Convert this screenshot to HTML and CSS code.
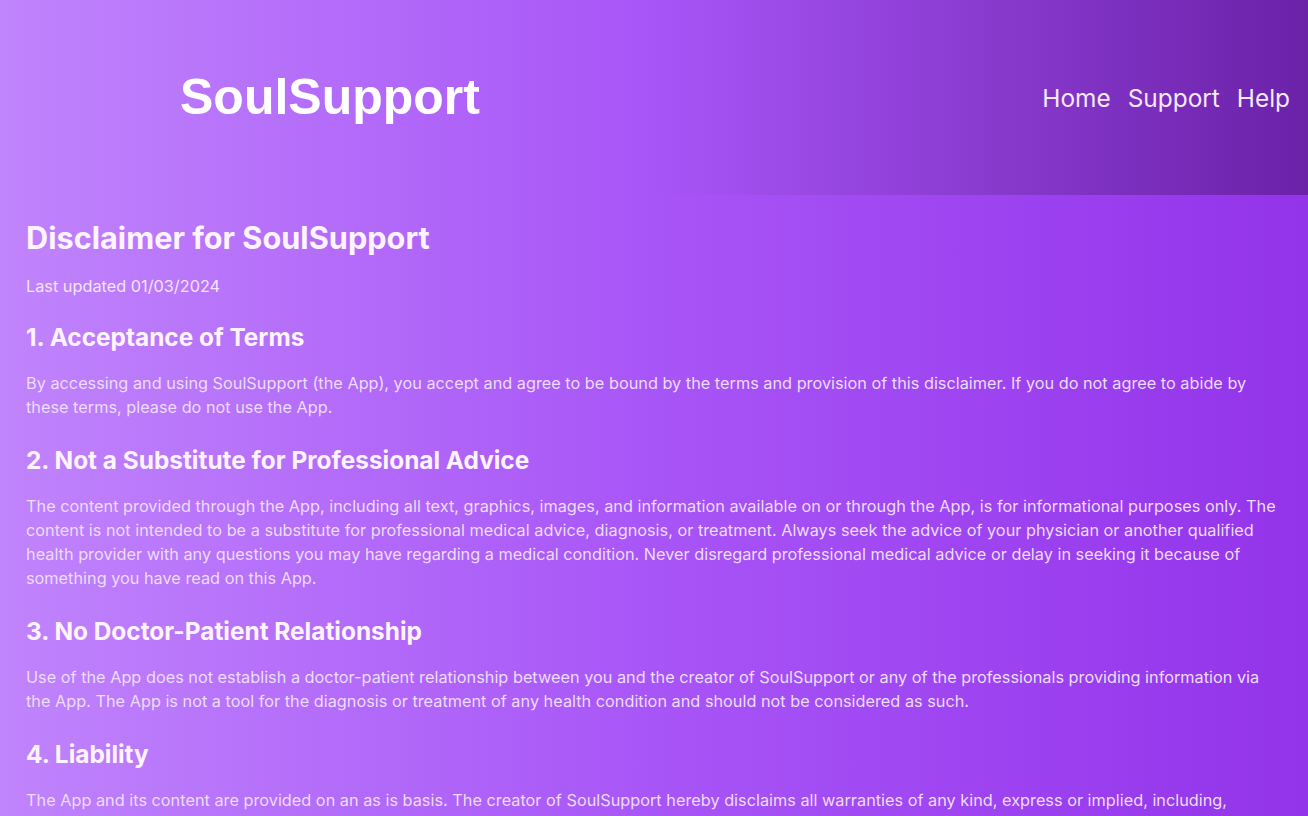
FILE: index.html
```html
<!DOCTYPE html>
<html lang="en">
<head>
<meta charset="utf-8">
<title>SoulSupport - Disclaimer</title>
<link rel="stylesheet" href="styles.css">
</head>
<body>
<header class="site-header">
  <div class="brand">SoulSupport</div>
  <nav class="nav">
    <a href="#">Home</a>
    <a href="#">Support</a>
    <a href="#">Help</a>
  </nav>
</header>
<main class="content">
  <h1 class="title">Disclaimer for SoulSupport</h1>
  <p class="updated">Last updated 01/03/2024</p>

  <h2 class="section-title">1. Acceptance of Terms</h2>
  <p class="text">By accessing and using SoulSupport (the App), you accept and agree to be bound by the terms and provision of this disclaimer. If you do not agree to abide by these terms, please do not use the App.</p>

  <h2 class="section-title">2. Not a Substitute for Professional Advice</h2>
  <p class="text">The content provided through the App, including all text, graphics, images, and information available on or through the App, is for informational purposes only. The content is not intended to be a substitute for professional medical advice, diagnosis, or treatment. Always seek the advice of your physician or another qualified health provider with any questions you may have regarding a medical condition. Never disregard professional medical advice or delay in seeking it because of something you have read on this App.</p>

  <h2 class="section-title">3. No Doctor-Patient Relationship</h2>
  <p class="text">Use of the App does not establish a doctor-patient relationship between you and the creator of SoulSupport or any of the professionals providing information via the App. The App is not a tool for the diagnosis or treatment of any health condition and should not be considered as such.</p>

  <h2 class="section-title">4. Liability</h2>
  <p class="text">The App and its content are provided on an as is basis. The creator of SoulSupport hereby disclaims all warranties of any kind, express or implied, including, without limitation, the warranties of merchantability, fitness for a particular purpose, and non-infringement.</p>
</main>
</body>
</html>
```

FILE: styles.css
```css
* {
  box-sizing: border-box;
}

html, body {
  margin: 0;
  padding: 0;
}

body {
  font-family: Inter, "Noto Sans", sans-serif;
  background: linear-gradient(to right, #c084fc 0%, #a855f7 50%, #9333ea 100%);
  color: #fdf4ff;
  min-height: 100vh;
}

.site-header {
  height: 195px;
  display: flex;
  align-items: center;
  background: linear-gradient(to right, #c084fc 0%, #a855f7 50%, #6b21a8 100%);
  padding-right: 18px;
}

.brand {
  width: 660px;
  text-align: center;
  font-family: "Liberation Sans", Arial, sans-serif;
  font-weight: 700;
  font-size: 50px;
  color: #ffffff;
  padding-bottom: 2px;
}

.nav {
  margin-left: auto;
  display: flex;
  gap: 17px;
}

.nav a {
  color: #f5e9ff;
  text-decoration: none;
  font-size: 24.4px;
  font-weight: 400;
}

.content {
  padding: 25px 26px 40px;
}

.title {
  margin: 0 0 20px;
  font-size: 30.7px;
  line-height: 36px;
  font-weight: 700;
  color: #fdf4ff;
}

.updated {
  margin: 0 0 2px;
  font-size: 16.3px;
  line-height: 20px;
  color: #f3e3ff;
}

.section-title {
  margin: 26px 0 19px;
  font-size: 24.4px;
  line-height: 30px;
  font-weight: 700;
  color: #fdf4ff;
}

.text {
  margin: 0;
  font-size: 16.3px;
  line-height: 24px;
  color: #ecdcff;
}
```
